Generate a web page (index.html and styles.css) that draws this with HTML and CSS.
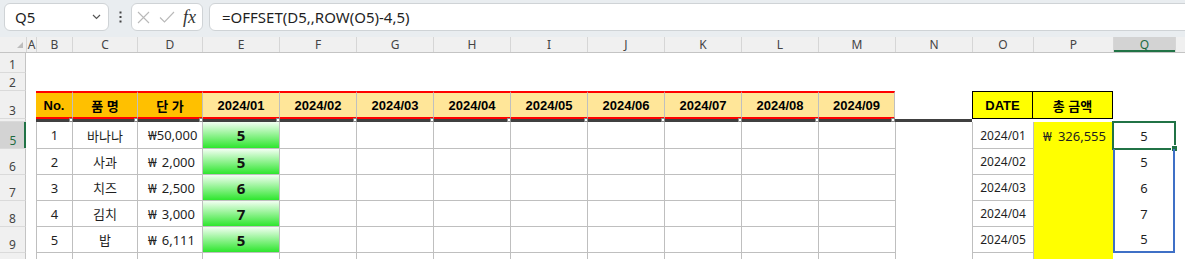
FILE: index.html
```html
<html>
<head>
  <meta charset="utf-8">
  <title>Sheet</title>
  <link rel="stylesheet" href="styles.css">
</head>
<body>
  <div class="bar">
    <div class="namebox">
      <span>Q5</span>
      <svg width="9" height="6" viewBox="0 0 9 6"><polyline points="1,1 4.5,4.5 8,1" fill="none" stroke="#555" stroke-width="1.2"/></svg>
    </div>
    <div class="more">
      <svg width="3" height="12" viewBox="0 0 3 12">
        <rect x="0.5" y="0.5" width="2" height="2" fill="#444"/>
        <rect x="0.5" y="5" width="2" height="2" fill="#444"/>
        <rect x="0.5" y="9.5" width="2" height="2" fill="#444"/>
      </svg>
    </div>
    <div class="fxbox">
      <svg width="13" height="13" viewBox="0 0 13 13"><path d="M1 1L12 12M12 1L1 12" stroke="#b9b9b9" stroke-width="1.1" fill="none"/></svg>
      <svg width="16" height="12" viewBox="0 0 16 12"><path d="M1 6.5L5.5 11L15 1" stroke="#b9b9b9" stroke-width="1.1" fill="none"/></svg>
      <span class="fx">fx</span>
    </div>
    <div class="formula">=OFFSET(D5,,ROW(O5)-4,5)</div>
  </div>

  <div class="sheet">
    <!-- column letters -->
    <div class="r ch">
      <div class="corner"><span class="tri"></span></div>
      <div>A</div><div>B</div><div>C</div><div>D</div><div>E</div><div>F</div><div>G</div>
      <div>H</div><div>I</div><div>J</div><div>K</div><div>L</div><div>M</div><div>N</div>
      <div>O</div><div>P</div><div class="on">Q</div><div></div>
    </div>

    <div class="r r1"><div class="rh">1</div></div>
    <div class="r r2"><div class="rh">2</div></div>

    <!-- header row -->
    <div class="r r3">
      <div class="rh">3</div><div></div>
      <div class="hd o first">No.</div>
      <div class="hd o">품 명</div>
      <div class="hd o">단 가</div>
      <div class="hd y">2024/01</div>
      <div class="hd y">2024/02</div>
      <div class="hd y">2024/03</div>
      <div class="hd y">2024/04</div>
      <div class="hd y">2024/05</div>
      <div class="hd y">2024/06</div>
      <div class="hd y">2024/07</div>
      <div class="hd y">2024/08</div>
      <div class="hd y last">2024/09</div>
      <div></div>
      <div class="dh">DATE</div>
      <div class="dh dh2">총 금액</div>
    </div>

    <div class="r r4"><div class="rh"></div><div></div><div class="band"></div></div>

    <div class="r rd r5">
      <div class="rh cur">5</div><div></div>
      <div class="t">1</div><div class="t">바나나</div>
      <div class="t w"><span>₩</span><span>50,000</span></div>
      <div class="t e">5</div>
      <div class="t"></div><div class="t"></div><div class="t"></div><div class="t"></div>
      <div class="t"></div><div class="t"></div><div class="t"></div><div class="t"></div>
      <div class="nl"></div>
      <div class="t dt">2024/01</div>
      <div class="p w"><span>₩</span><span>326,555</span></div>
      <div class="q">5<span class="sel"></span></div>
    </div>

    <div class="r rd">
      <div class="rh">6</div><div></div>
      <div class="t">2</div><div class="t">사과</div>
      <div class="t w"><span>₩</span><span>2,000</span></div>
      <div class="t e">5</div>
      <div class="t"></div><div class="t"></div><div class="t"></div><div class="t"></div>
      <div class="t"></div><div class="t"></div><div class="t"></div><div class="t"></div>
      <div class="nl"></div>
      <div class="t dt">2024/02</div>
      <div class="p"></div>
      <div class="q spill">5</div>
    </div>

    <div class="r rd">
      <div class="rh">7</div><div></div>
      <div class="t">3</div><div class="t">치즈</div>
      <div class="t w"><span>₩</span><span>2,500</span></div>
      <div class="t e">6</div>
      <div class="t"></div><div class="t"></div><div class="t"></div><div class="t"></div>
      <div class="t"></div><div class="t"></div><div class="t"></div><div class="t"></div>
      <div class="nl"></div>
      <div class="t dt">2024/03</div>
      <div class="p"></div>
      <div class="q spill">6</div>
    </div>

    <div class="r rd">
      <div class="rh">8</div><div></div>
      <div class="t">4</div><div class="t">김치</div>
      <div class="t w"><span>₩</span><span>3,000</span></div>
      <div class="t e">7</div>
      <div class="t"></div><div class="t"></div><div class="t"></div><div class="t"></div>
      <div class="t"></div><div class="t"></div><div class="t"></div><div class="t"></div>
      <div class="nl"></div>
      <div class="t dt">2024/04</div>
      <div class="p"></div>
      <div class="q spill">7</div>
    </div>

    <div class="r rd">
      <div class="rh">9</div><div></div>
      <div class="t">5</div><div class="t">밥</div>
      <div class="t w"><span>₩</span><span>6,111</span></div>
      <div class="t e">5</div>
      <div class="t"></div><div class="t"></div><div class="t"></div><div class="t"></div>
      <div class="t"></div><div class="t"></div><div class="t"></div><div class="t"></div>
      <div class="nl"></div>
      <div class="t dt">2024/05</div>
      <div class="p"></div>
      <div class="q spill end">5</div>
    </div>

    <div class="r rd">
      <div class="rh"></div><div></div>
      <div class="t"></div><div class="t"></div><div class="t"></div><div class="t"></div>
      <div class="t"></div><div class="t"></div><div class="t"></div><div class="t"></div>
      <div class="t"></div><div class="t"></div><div class="t"></div><div class="t"></div>
      <div class="nl"></div>
      <div class="t dt"></div>
      <div class="p"></div>
      <div class="q"></div>
    </div>
  </div>
</body>
</html>
```

FILE: styles.css
```css
body {
  margin: 0;
  width: 1185px;
  height: 259px;
  overflow: hidden;
  background: #fff;
  font-family: "Noto Sans", "Noto Sans CJK KR", sans-serif;
  color: #1f1f1f;
}

/* formula bar */
.bar {
  height: 37px;
  box-sizing: border-box;
  padding: 3px 0 0 4px;
  background: #e9edf0;
  display: flex;
  align-items: flex-start;
  overflow: hidden;
}
.namebox {
  width: 105px;
  height: 28px;
  box-sizing: border-box;
  background: #fff;
  border: 1px solid #cfd3d6;
  border-radius: 6px;
  display: flex;
  align-items: center;
  justify-content: space-between;
  padding: 0 7px 0 10px;
  font-size: 15px;
}
.more {
  width: 22px;
  height: 28px;
  display: flex;
  align-items: center;
  justify-content: center;
}
.fxbox {
  width: 72px;
  height: 28px;
  box-sizing: border-box;
  background: #fff;
  border: 1px solid #cfd3d6;
  border-radius: 6px;
  display: flex;
  align-items: center;
  gap: 9px;
  padding-left: 5px;
}
.fx {
  font-family: "Liberation Serif", serif;
  font-style: italic;
  font-size: 18px;
  color: #333;
  margin-left: -1px;
}
.formula {
  flex: 1;
  height: 28px;
  margin: 0 -20px 0 6px;
  box-sizing: border-box;
  background: #fff;
  border: 1px solid #cfd3d6;
  border-radius: 6px;
  padding-left: 12px;
  display: flex;
  align-items: center;
  font-size: 15px;
  color: #1f1f1f;
}

/* grid */
.r {
  display: grid;
  grid-template-columns: 26px 10px 36px 65px 65px repeat(10, 77px) 61px 80px 62px 1fr;
}
.ch { height: 15px; background: #f0f0f0; border-bottom: 1px solid #c4c4c4; }
.ch div {
  border-left: 1px solid #d6d6d6;
  font-size: 12px;
  line-height: 15px;
  text-align: center;
  color: #444;
}
.ch .corner {
  border-left: none;
  display: flex;
  justify-content: flex-end;
  align-items: flex-end;
  padding: 0 3px 4px 0;
}
.tri {
  width: 0;
  height: 0;
  border-left: 6px solid transparent;
  border-bottom: 6px solid #bdbdbd;
}
.ch .on {
  background: #d3d3d3;
  color: #1e6b41;
  box-shadow: inset 0 -2px #217346;
}

.r1 { height: 20px; }
.r2 { height: 18px; }
.r3 { height: 28px; }
.r4 { height: 3px; }
.rd { height: 26px; }
.r5 { height: 27px; }

.rh {
  background: #f0f0f0;
  border-right: 1px solid #c4c4c4;
  border-bottom: 1px solid #dadada;
  box-sizing: border-box;
  font-size: 12px;
  line-height: 15px;
  color: #444;
  display: flex;
  justify-content: center;
  align-items: flex-end;
  overflow: hidden;
}
.rh.cur {
  background: #d3d3d3;
  color: #1e6b41;
  border-right: none;
  box-shadow: inset -2px 0 #217346;
}

/* header row */
.hd {
  position: relative;
  box-sizing: border-box;
  border-top: 2px solid #ff0000;
  border-bottom: 2px solid #ff0000;
  border-left: 1px solid #bfbfbf;
  display: flex;
  align-items: center;
  justify-content: center;
  font-family: "Liberation Sans", "Noto Sans CJK KR", sans-serif;
  font-weight: bold;
  font-size: 13px;
  color: #000;
}
.hd.first { border-left: none; }
.hd.last { border-right: 1px solid #bfbfbf; }
.hd.o { background: #ffc000; }
.hd.y { background: #ffe699; }
.hd::after {
  content: "";
  position: absolute;
  right: -1px;
  bottom: -5px;
  width: 4px;
  height: 4px;
  box-sizing: border-box;
  background: #fff;
  border: 1px solid #8a8a8a;
  z-index: 2;
}
.dh {
  background: #ffff00;
  border: 1px solid #000;
  display: flex;
  align-items: center;
  justify-content: center;
  font-family: "Liberation Sans", "Noto Sans CJK KR", sans-serif;
  font-weight: bold;
  font-size: 13px;
  color: #000;
}
.dh2 { border-left: none; }

.band {
  grid-column: 3 / 16;
  background: #404040;
}

/* data cells */
.t {
  box-sizing: border-box;
  border-left: 1px solid #bfbfbf;
  border-bottom: 1px solid #bfbfbf;
  display: flex;
  align-items: center;
  justify-content: center;
  font-size: 13px;
}
.nl { border-left: 1px solid #bfbfbf; }
.t.w { justify-content: space-between; padding: 0 7px 0 10px; }
.t.e {
  background: linear-gradient(180deg, #f2fff2 0%, #2ee62e 100%);
  font-weight: bold;
  font-size: 15px;
  color: #111;
}
.t.dt { font-size: 12px; }
.p {
  background: #ffff00;
  border-left: 1px solid #bfbfbf;
  font-size: 13px;
}
.p.w {
  display: flex;
  align-items: center;
  justify-content: space-between;
  padding: 0 7px 0 9px;
}
.q {
  position: relative;
  box-sizing: border-box;
  display: flex;
  align-items: center;
  justify-content: center;
  font-size: 13px;
}
.q.spill {
  border-left: 2px solid #3f70c6;
  border-right: 2px solid #3f70c6;
}
.q.end { border-bottom: 2px solid #3f70c6; }
.sel {
  position: absolute;
  top: -1px;
  left: -1px;
  right: -1px;
  bottom: -1px;
  border: 2px solid #217346;
}
.sel::after {
  content: "";
  position: absolute;
  right: -4px;
  bottom: -4px;
  width: 5px;
  height: 5px;
  background: #217346;
  border: 1px solid #fff;
}
```
